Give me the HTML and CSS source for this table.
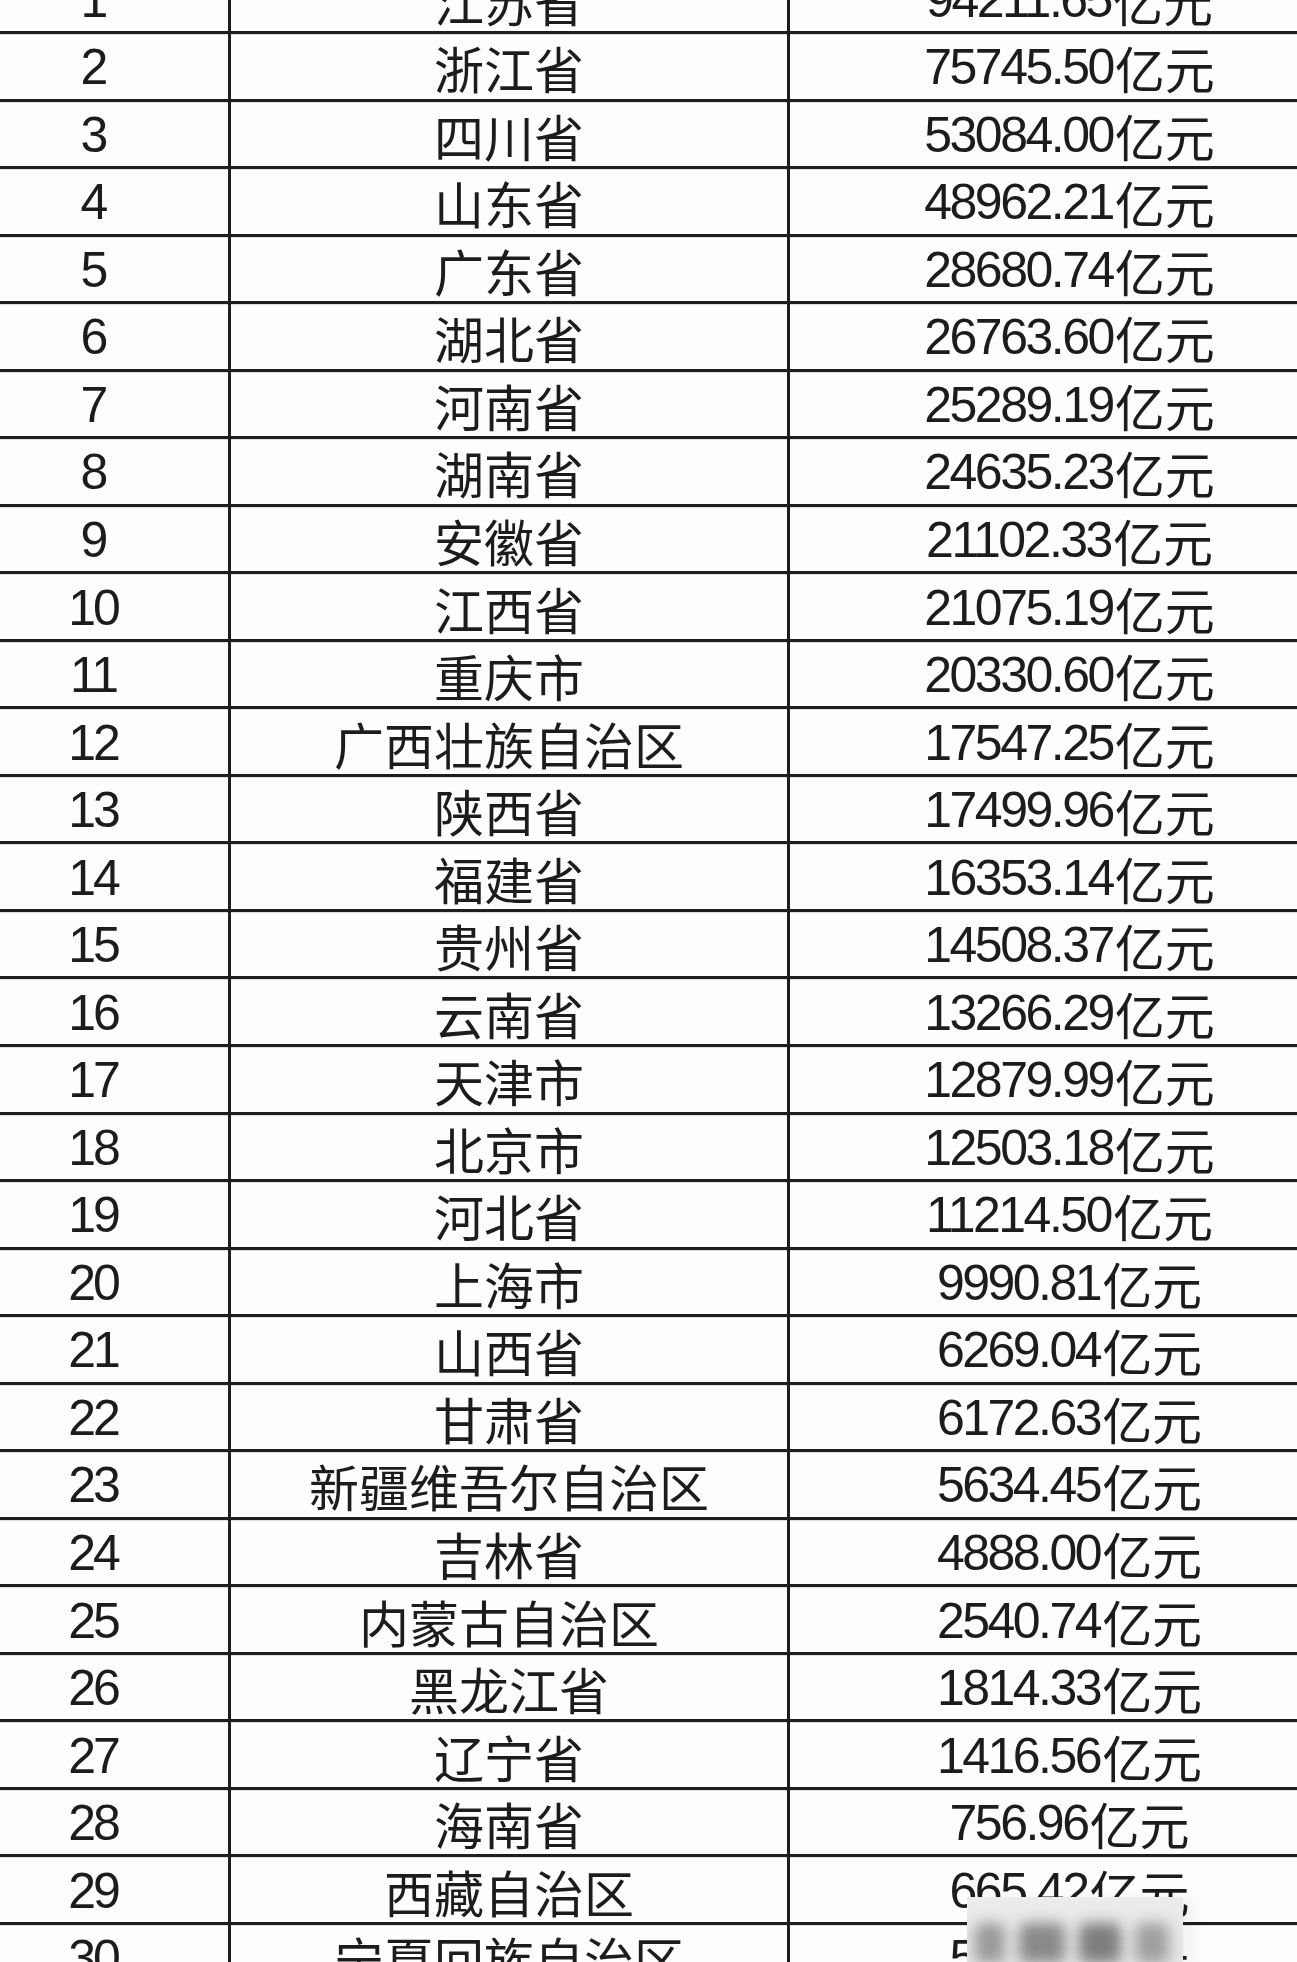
FILE: index.html
```html
<!DOCTYPE html>
<html lang="zh-CN">
<head>
<meta charset="utf-8">
<title>各省数据</title>
<link rel="stylesheet" href="styles.css">
</head>
<body>
<div class="sheet">
  <div class="row"><div class="c1"><span class="num">1</span></div><div class="c2">江苏省</div><div class="c3"><span class="num">94211.65</span>亿元</div></div>
  <div class="row"><div class="c1"><span class="num">2</span></div><div class="c2">浙江省</div><div class="c3"><span class="num">75745.50</span>亿元</div></div>
  <div class="row"><div class="c1"><span class="num">3</span></div><div class="c2">四川省</div><div class="c3"><span class="num">53084.00</span>亿元</div></div>
  <div class="row"><div class="c1"><span class="num">4</span></div><div class="c2">山东省</div><div class="c3"><span class="num">48962.21</span>亿元</div></div>
  <div class="row"><div class="c1"><span class="num">5</span></div><div class="c2">广东省</div><div class="c3"><span class="num">28680.74</span>亿元</div></div>
  <div class="row"><div class="c1"><span class="num">6</span></div><div class="c2">湖北省</div><div class="c3"><span class="num">26763.60</span>亿元</div></div>
  <div class="row"><div class="c1"><span class="num">7</span></div><div class="c2">河南省</div><div class="c3"><span class="num">25289.19</span>亿元</div></div>
  <div class="row"><div class="c1"><span class="num">8</span></div><div class="c2">湖南省</div><div class="c3"><span class="num">24635.23</span>亿元</div></div>
  <div class="row"><div class="c1"><span class="num">9</span></div><div class="c2">安徽省</div><div class="c3"><span class="num">21102.33</span>亿元</div></div>
  <div class="row"><div class="c1"><span class="num">10</span></div><div class="c2">江西省</div><div class="c3"><span class="num">21075.19</span>亿元</div></div>
  <div class="row"><div class="c1"><span class="num">11</span></div><div class="c2">重庆市</div><div class="c3"><span class="num">20330.60</span>亿元</div></div>
  <div class="row"><div class="c1"><span class="num">12</span></div><div class="c2">广西壮族自治区</div><div class="c3"><span class="num">17547.25</span>亿元</div></div>
  <div class="row"><div class="c1"><span class="num">13</span></div><div class="c2">陕西省</div><div class="c3"><span class="num">17499.96</span>亿元</div></div>
  <div class="row"><div class="c1"><span class="num">14</span></div><div class="c2">福建省</div><div class="c3"><span class="num">16353.14</span>亿元</div></div>
  <div class="row"><div class="c1"><span class="num">15</span></div><div class="c2">贵州省</div><div class="c3"><span class="num">14508.37</span>亿元</div></div>
  <div class="row"><div class="c1"><span class="num">16</span></div><div class="c2">云南省</div><div class="c3"><span class="num">13266.29</span>亿元</div></div>
  <div class="row"><div class="c1"><span class="num">17</span></div><div class="c2">天津市</div><div class="c3"><span class="num">12879.99</span>亿元</div></div>
  <div class="row"><div class="c1"><span class="num">18</span></div><div class="c2">北京市</div><div class="c3"><span class="num">12503.18</span>亿元</div></div>
  <div class="row"><div class="c1"><span class="num">19</span></div><div class="c2">河北省</div><div class="c3"><span class="num">11214.50</span>亿元</div></div>
  <div class="row"><div class="c1"><span class="num">20</span></div><div class="c2">上海市</div><div class="c3"><span class="num">9990.81</span>亿元</div></div>
  <div class="row"><div class="c1"><span class="num">21</span></div><div class="c2">山西省</div><div class="c3"><span class="num">6269.04</span>亿元</div></div>
  <div class="row"><div class="c1"><span class="num">22</span></div><div class="c2">甘肃省</div><div class="c3"><span class="num">6172.63</span>亿元</div></div>
  <div class="row"><div class="c1"><span class="num">23</span></div><div class="c2">新疆维吾尔自治区</div><div class="c3"><span class="num">5634.45</span>亿元</div></div>
  <div class="row"><div class="c1"><span class="num">24</span></div><div class="c2">吉林省</div><div class="c3"><span class="num">4888.00</span>亿元</div></div>
  <div class="row"><div class="c1"><span class="num">25</span></div><div class="c2">内蒙古自治区</div><div class="c3"><span class="num">2540.74</span>亿元</div></div>
  <div class="row"><div class="c1"><span class="num">26</span></div><div class="c2">黑龙江省</div><div class="c3"><span class="num">1814.33</span>亿元</div></div>
  <div class="row"><div class="c1"><span class="num">27</span></div><div class="c2">辽宁省</div><div class="c3"><span class="num">1416.56</span>亿元</div></div>
  <div class="row"><div class="c1"><span class="num">28</span></div><div class="c2">海南省</div><div class="c3"><span class="num">756.96</span>亿元</div></div>
  <div class="row"><div class="c1"><span class="num">29</span></div><div class="c2">西藏自治区</div><div class="c3"><span class="num">665.42</span>亿元</div></div>
  <div class="row"><div class="c1"><span class="num">30</span></div><div class="c2">宁夏回族自治区</div><div class="c3"><span class="num">529.64</span>亿元</div></div>
</div>
<div class="watermark" aria-hidden="true">
  <div class="wm-blobs">
    <span class="blob b1"></span>
    <span class="blob b2"></span>
    <span class="blob b3"></span>
    <span class="blob b4"></span>
  </div>
</div>
</body>
</html>
```

FILE: styles.css
```css
html, body {
  margin: 0;
  padding: 0;
  background: #fdfdfd;
}
body {
  width: 1297px;
  height: 1962px;
  overflow: hidden;
  position: relative;
  font-family: "Noto Sans CJK SC", "Liberation Sans", sans-serif;
  color: #1c1c1c;
}
.sheet {
  margin-left: -42px;
  margin-top: -33.5px;
  width: 1391px;
}
.row {
  display: grid;
  grid-template-columns: 273px 559px 559px;
  height: 67.54px;
  box-sizing: border-box;
  border-bottom: 3px solid #1e1e1e;
  box-shadow: 0 1px 0 rgba(0,0,0,0.12);
}
.c1, .c2, .c3 {
  display: flex;
  align-items: center;
  justify-content: center;
  font-size: 50px;
  line-height: 1;
  white-space: nowrap;
  box-sizing: border-box;
  padding-top: 2px;
}
.c1, .c2 {
  border-right: 3px solid #1e1e1e;
}
.num {
  font-family: "Liberation Sans", sans-serif;
  letter-spacing: -2.5px;
  margin-right: 2px;
}
.c1 .num {
  letter-spacing: -3px;
  margin-right: 0;
}
.watermark {
  position: absolute;
  left: 967px;
  top: 1897px;
  width: 216px;
  height: 70px;
  background: linear-gradient(180deg, #ececec 0%, #e4e4e4 100%);
  box-shadow: 12px 0 14px rgba(0,0,0,0.04);
  overflow: hidden;
}
.wm-blobs {
  display: flex;
  gap: 14px;
  align-items: flex-end;
  padding: 26px 8px 0 8px;
  filter: blur(7px);
}
.blob {
  display: block;
  width: 38px;
  height: 40px;
  border-radius: 8px;
  background: #8a8a8a;
}
.b1 { width: 30px; background: #9a9a9a; }
.b2 { width: 46px; }
.b3 { width: 42px; background: #7e7e7e; }
.b4 { width: 34px; background: #a0a0a0; }
```
